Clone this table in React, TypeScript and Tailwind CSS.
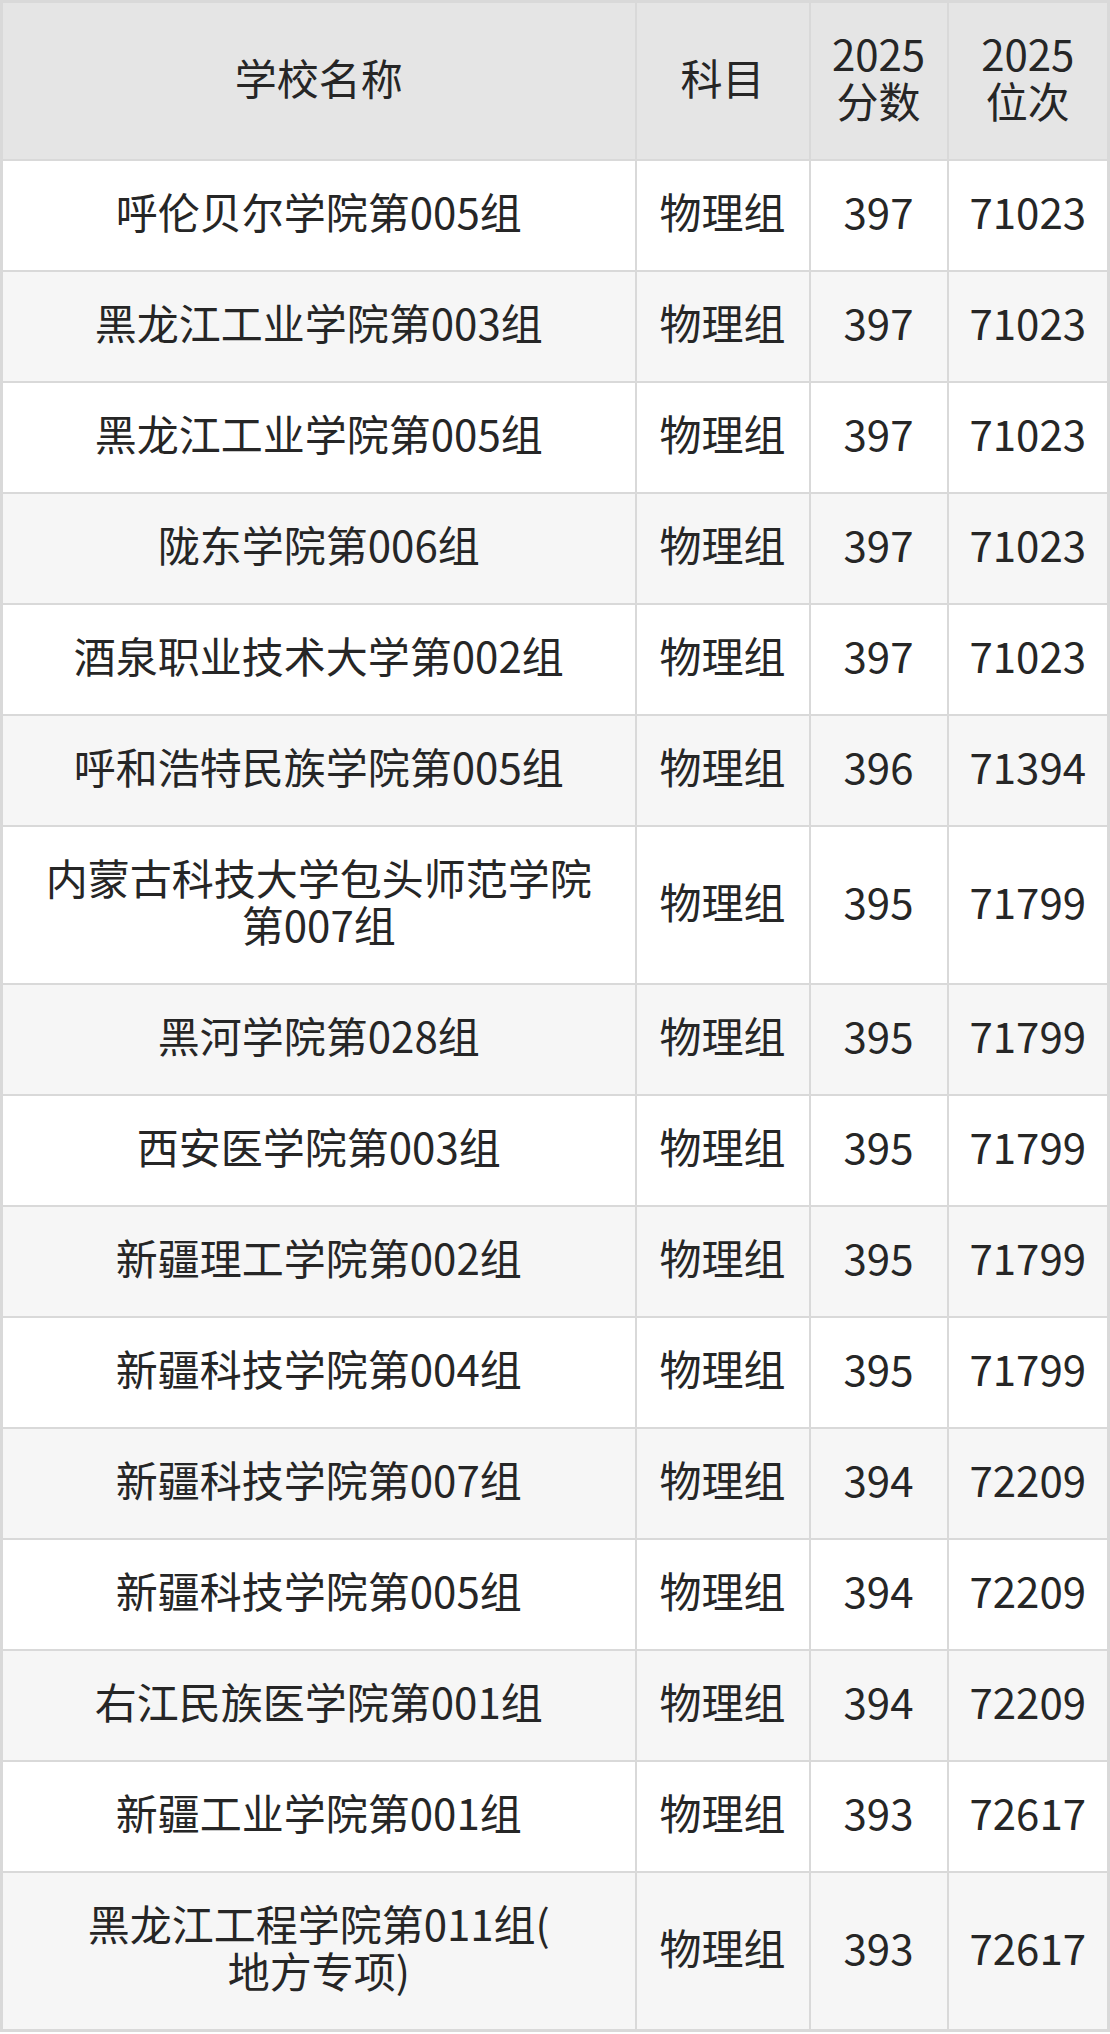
const rows: [React.ReactNode, string, string, string][] = [
  ["呼伦贝尔学院第005组", "物理组", "397", "71023"],
  ["黑龙江工业学院第003组", "物理组", "397", "71023"],
  ["黑龙江工业学院第005组", "物理组", "397", "71023"],
  ["陇东学院第006组", "物理组", "397", "71023"],
  ["酒泉职业技术大学第002组", "物理组", "397", "71023"],
  ["呼和浩特民族学院第005组", "物理组", "396", "71394"],
  [
    <>
      内蒙古科技大学包头师范学院
      <br />
      第007组
    </>,
    "物理组",
    "395",
    "71799",
  ],
  ["黑河学院第028组", "物理组", "395", "71799"],
  ["西安医学院第003组", "物理组", "395", "71799"],
  ["新疆理工学院第002组", "物理组", "395", "71799"],
  ["新疆科技学院第004组", "物理组", "395", "71799"],
  ["新疆科技学院第007组", "物理组", "394", "72209"],
  ["新疆科技学院第005组", "物理组", "394", "72209"],
  ["右江民族医学院第001组", "物理组", "394", "72209"],
  ["新疆工业学院第001组", "物理组", "393", "72617"],
  [
    <>
      黑龙江工程学院第011组(
      <br />
      地方专项)
    </>,
    "物理组",
    "393",
    "72617",
  ],
];

const cell =
  "border-2 border-[#d9d9d9] px-2 pt-[26px] pb-[36px] text-center align-middle";

export default function App() {
  return (
    <div className="w-[1110px] bg-white text-[#262626] font-['Noto_Sans_CJK_SC','Noto_Sans',sans-serif] text-[42px] leading-[47px]">
      <table className="w-full table-fixed border-collapse border-[3px] border-[#d9d9d9]">
        <colgroup>
          <col className="w-[634px]" />
          <col className="w-[174px]" />
          <col className="w-[138px]" />
          <col />
        </colgroup>
        <thead>
          <tr className="bg-[#e5e5e5]">
            <th className={`${cell} font-normal`}>学校名称</th>
            <th className={`${cell} font-normal`}>科目</th>
            <th className={`${cell} font-normal`}>
              2025
              <br />
              分数
            </th>
            <th className={`${cell} font-normal`}>
              2025
              <br />
              位次
            </th>
          </tr>
        </thead>
        <tbody>
          {rows.map(([name, subject, score, rank], i) => (
            <tr key={i} className={i % 2 === 0 ? "bg-white" : "bg-[#f6f6f6]"}>
              <td className={cell}>{name}</td>
              <td className={cell}>{subject}</td>
              <td className={cell}>{score}</td>
              <td className={cell}>{rank}</td>
            </tr>
          ))}
        </tbody>
      </table>
    </div>
  );
}
